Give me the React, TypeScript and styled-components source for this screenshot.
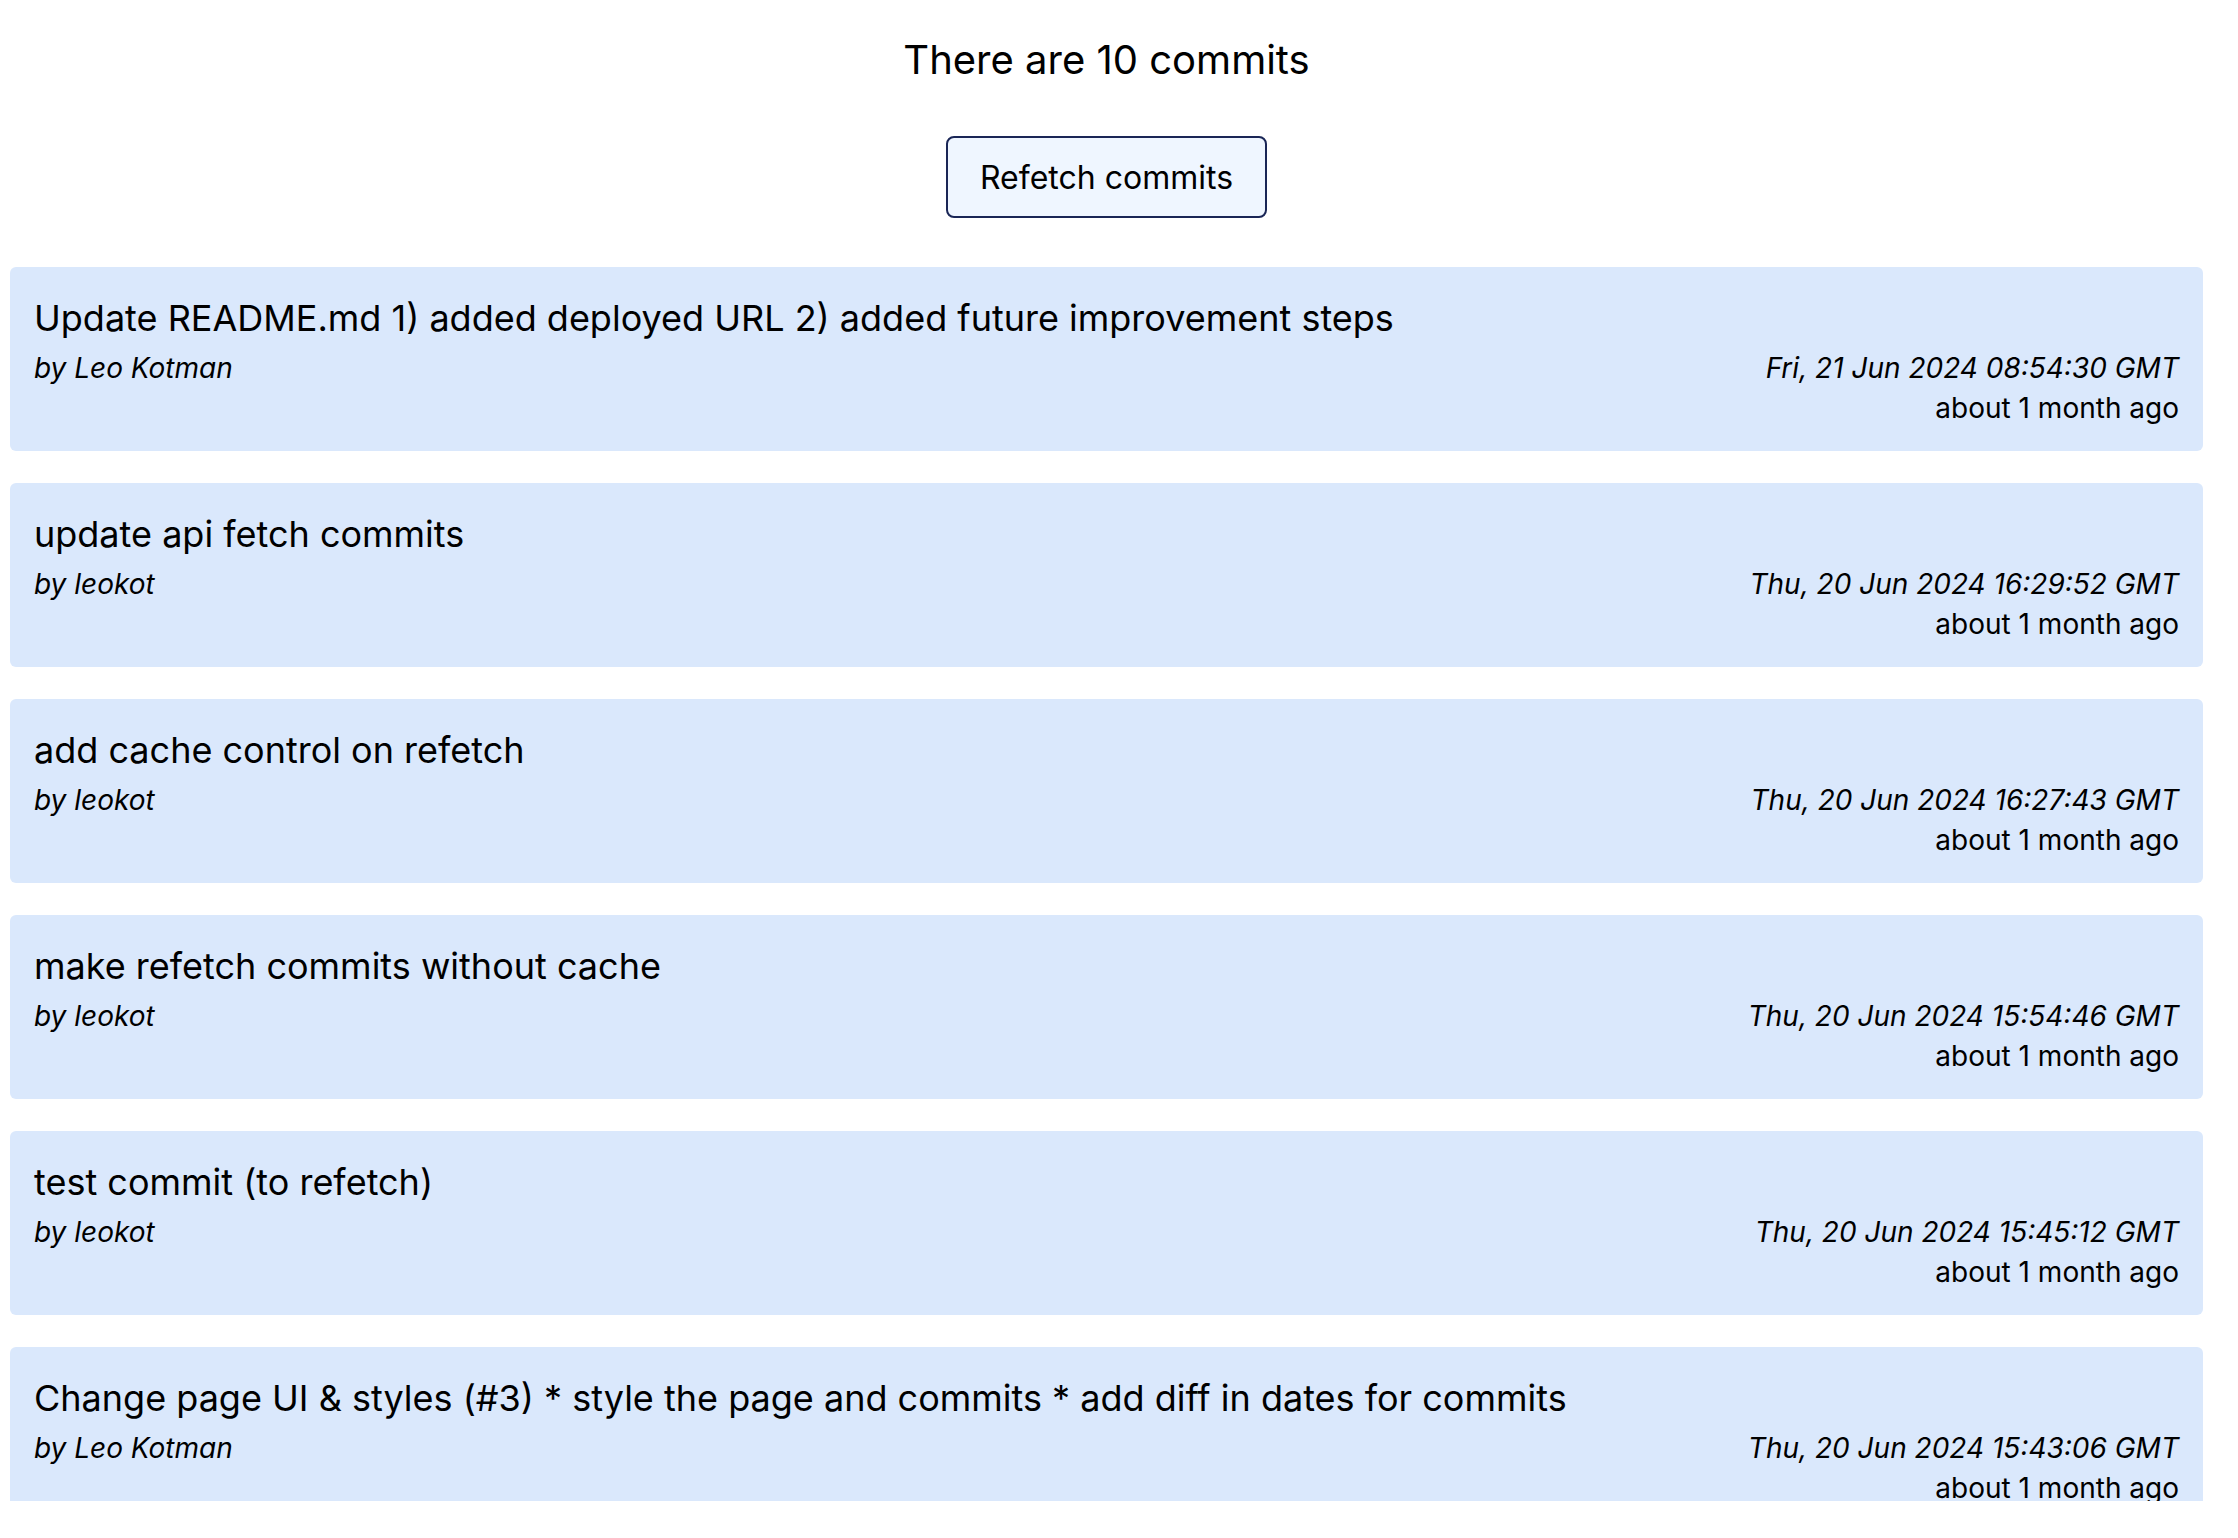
import React from "react";
import styled, { createGlobalStyle } from "styled-components";

const GlobalStyle = createGlobalStyle`
  html, body {
    margin: 0;
    padding: 0;
    background: #ffffff;
  }
  body {
    font-family: Inter, "Noto Sans", "Liberation Sans", sans-serif;
    color: #000000;
  }
  * { box-sizing: border-box; }
`;

const Viewport = styled.div`
  height: 1501px;
  overflow: hidden;
  background: #ffffff;
`;

const Page = styled.main`
  padding: 35px 35px 0 10px;
  display: flex;
  flex-direction: column;
  align-items: center;
`;

const Heading = styled.h1`
  margin: 0;
  font-size: 40px;
  font-weight: 400;
  line-height: normal;
  text-align: center;
`;

const RefetchButton = styled.button`
  margin-top: 52px;
  padding: 19.5px 32px;
  font-family: inherit;
  font-size: 32px;
  line-height: normal;
  color: #000000;
  background: #eff6ff;
  border: 2px solid #1a2656;
  border-radius: 8px;
  cursor: pointer;
`;

const List = styled.ul`
  list-style: none;
  margin: 49px 0 0;
  padding: 0;
  width: 100%;
  display: flex;
  flex-direction: column;
  gap: 32px;
`;

const Card = styled.li`
  background: #dae8fc;
  border-radius: 6px;
  padding: 29px 24px 23px 24px;
  display: flex;
  flex-direction: column;
  gap: 8px;
`;

const Message = styled.div`
  font-size: 36px;
  line-height: normal;
`;

const MetaRow = styled.div`
  display: flex;
  justify-content: space-between;
  align-items: flex-start;
  font-size: 28px;
  line-height: 40px;
`;

const Author = styled.span`
  font-style: italic;
`;

const Dates = styled.div`
  display: flex;
  flex-direction: column;
  align-items: flex-end;
  text-align: right;
`;

const DateLine = styled.span<{ $italic?: boolean }>`
  font-style: ${(p) => (p.$italic ? "italic" : "normal")};
`;

type Commit = { message: string; author: string; date: string; ago: string };

const commits: Commit[] = [
  {
    message: "Update README.md 1) added deployed URL 2) added future improvement steps",
    author: "Leo Kotman",
    date: "Fri, 21 Jun 2024 08:54:30 GMT",
    ago: "about 1 month ago",
  },
  {
    message: "update api fetch commits",
    author: "leokot",
    date: "Thu, 20 Jun 2024 16:29:52 GMT",
    ago: "about 1 month ago",
  },
  {
    message: "add cache control on refetch",
    author: "leokot",
    date: "Thu, 20 Jun 2024 16:27:43 GMT",
    ago: "about 1 month ago",
  },
  {
    message: "make refetch commits without cache",
    author: "leokot",
    date: "Thu, 20 Jun 2024 15:54:46 GMT",
    ago: "about 1 month ago",
  },
  {
    message: "test commit (to refetch)",
    author: "leokot",
    date: "Thu, 20 Jun 2024 15:45:12 GMT",
    ago: "about 1 month ago",
  },
  {
    message:
      "Change page UI & styles (#3) * style the page and commits * add diff in dates for commits",
    author: "Leo Kotman",
    date: "Thu, 20 Jun 2024 15:43:06 GMT",
    ago: "about 1 month ago",
  },
  {
    message: "add refetch button",
    author: "leokot",
    date: "Thu, 20 Jun 2024 14:12:31 GMT",
    ago: "about 1 month ago",
  },
  {
    message: "fetch commits from github api",
    author: "leokot",
    date: "Thu, 20 Jun 2024 13:40:05 GMT",
    ago: "about 1 month ago",
  },
  {
    message: "init project",
    author: "leokot",
    date: "Thu, 20 Jun 2024 12:58:17 GMT",
    ago: "about 1 month ago",
  },
  {
    message: "Initial commit",
    author: "Leo Kotman",
    date: "Thu, 20 Jun 2024 12:51:02 GMT",
    ago: "about 1 month ago",
  },
];

export default function App() {
  return (
    <>
      <GlobalStyle />
      <Viewport>
        <Page>
          <Heading>There are {commits.length} commits</Heading>
          <RefetchButton type="button">Refetch commits</RefetchButton>
          <List>
            {commits.map((c, i) => (
              <Card key={i}>
                <Message>{c.message}</Message>
                <MetaRow>
                  <Author>by {c.author}</Author>
                  <Dates>
                    <DateLine $italic>{c.date}</DateLine>
                    <DateLine>{c.ago}</DateLine>
                  </Dates>
                </MetaRow>
              </Card>
            ))}
          </List>
        </Page>
      </Viewport>
    </>
  );
}
